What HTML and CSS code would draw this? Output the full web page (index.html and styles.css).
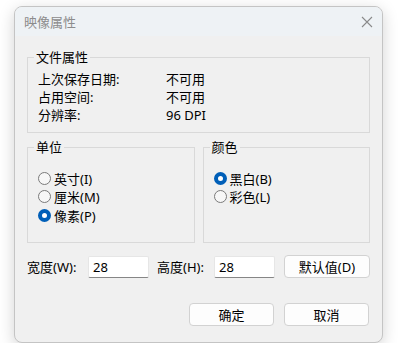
FILE: index.html
```html
<!DOCTYPE html>
<html lang="zh-CN">
<head>
    <meta charset="UTF-8">
    <title>映像属性</title>
    <link rel="stylesheet" href="styles.css">
</head>
<body>
    <div class="window">
        <div class="titlebar">
            <span class="title">映像属性</span>
            <svg class="close" width="12" height="12" viewBox="0 0 12 12">
                <path d="M1 1 L11 11 M11 1 L1 11" stroke="#8a8a8a" stroke-width="1.1" fill="none"/>
            </svg>
        </div>

        <div class="content">
            <fieldset class="group info">
                <legend>文件属性</legend>
                <div class="row"><span class="label">上次保存日期:</span><span>不可用</span></div>
                <div class="row"><span class="label">占用空间:</span><span>不可用</span></div>
                <div class="row"><span class="label">分辨率:</span><span>96 DPI</span></div>
            </fieldset>

            <div class="pair">
                <fieldset class="group choice">
                    <legend>单位</legend>
                    <div class="radio"><span class="dot"></span>英寸(I)</div>
                    <div class="radio"><span class="dot"></span>厘米(M)</div>
                    <div class="radio checked"><span class="dot"></span>像素(P)</div>
                </fieldset>
                <fieldset class="group choice">
                    <legend>颜色</legend>
                    <div class="radio checked"><span class="dot"></span>黑白(B)</div>
                    <div class="radio"><span class="dot"></span>彩色(L)</div>
                </fieldset>
            </div>

            <div class="size-row">
                <span class="size-label w">宽度(W):</span>
                <div class="field">28</div>
                <span class="size-label h">高度(H):</span>
                <div class="field">28</div>
                <button class="btn default">默认值(D)</button>
            </div>

            <div class="actions">
                <button class="btn">确定</button>
                <button class="btn">取消</button>
            </div>
        </div>
    </div>
</body>
</html>
```

FILE: styles.css
```css
* {
    margin: 0;
    padding: 0;
    box-sizing: border-box;
}

body {
    font-family: "Noto Sans", "Noto Sans CJK SC", sans-serif;
    font-size: 13px;
    color: #000;
    background: #fff;
    padding: 6px 0 0 14px;
}

.window {
    width: 369px;
    height: 337px;
    background: #f0f0f0;
    border: 1px solid #c4c4c4;
    border-radius: 8px;
    overflow: hidden;
    box-shadow: 0 4px 16px rgba(0, 0, 0, 0.18);
    display: flex;
    flex-direction: column;
}

.titlebar {
    height: 29px;
    background: #eef2f5;
    display: flex;
    align-items: center;
    justify-content: space-between;
    padding: 0 9px 0 9px;
    color: #8c8c8c;
    flex-shrink: 0;
}

.close {
    display: block;
}

.content {
    padding: 12px 12px 0 12px;
    display: flex;
    flex-direction: column;
}

.group {
    border: 1px solid #d9d9d9;
    padding: 4px 10px 8px 10px;
    min-width: 0;
}

.group legend {
    margin-left: -4px;
    padding: 0 2px;
    line-height: 18px;
}

.row {
    display: flex;
    line-height: 18px;
}

.label {
    width: 128px;
}

.pair {
    display: flex;
    gap: 8px;
    margin-top: 5px;
}

.pair .group {
    flex: 1;
    height: 105px;
    padding-top: 13px;
}

.radio {
    display: flex;
    align-items: center;
    height: 18.5px;
}

.dot {
    width: 13px;
    height: 13px;
    border: 1px solid #7a7a7a;
    border-radius: 50%;
    background: #f7f7f7;
    margin-right: 3px;
}

.radio.checked .dot {
    border: 4px solid #005fb8;
    background: #fff;
}

.size-row {
    display: flex;
    align-items: center;
    margin-top: 12px;
}

.size-label.w {
    width: 61px;
}

.size-label.h {
    width: 57px;
    margin-left: 8px;
}

.field {
    width: 61px;
    height: 22px;
    background: #fff;
    border: 1px solid #e6e6e6;
    border-bottom-color: #868686;
    border-radius: 2px;
    padding-left: 4px;
    line-height: 20px;
}

.btn {
    font-family: inherit;
    font-size: 13px;
    color: #000;
    width: 85px;
    height: 23px;
    background: #fdfdfd;
    border: 1px solid #d2d2d2;
    border-radius: 4px;
}

.btn.default {
    width: 86px;
    margin-left: 9px;
}

.actions {
    display: flex;
    justify-content: flex-end;
    gap: 10px;
    margin-top: 25px;
    padding-right: 1px;
}
```
